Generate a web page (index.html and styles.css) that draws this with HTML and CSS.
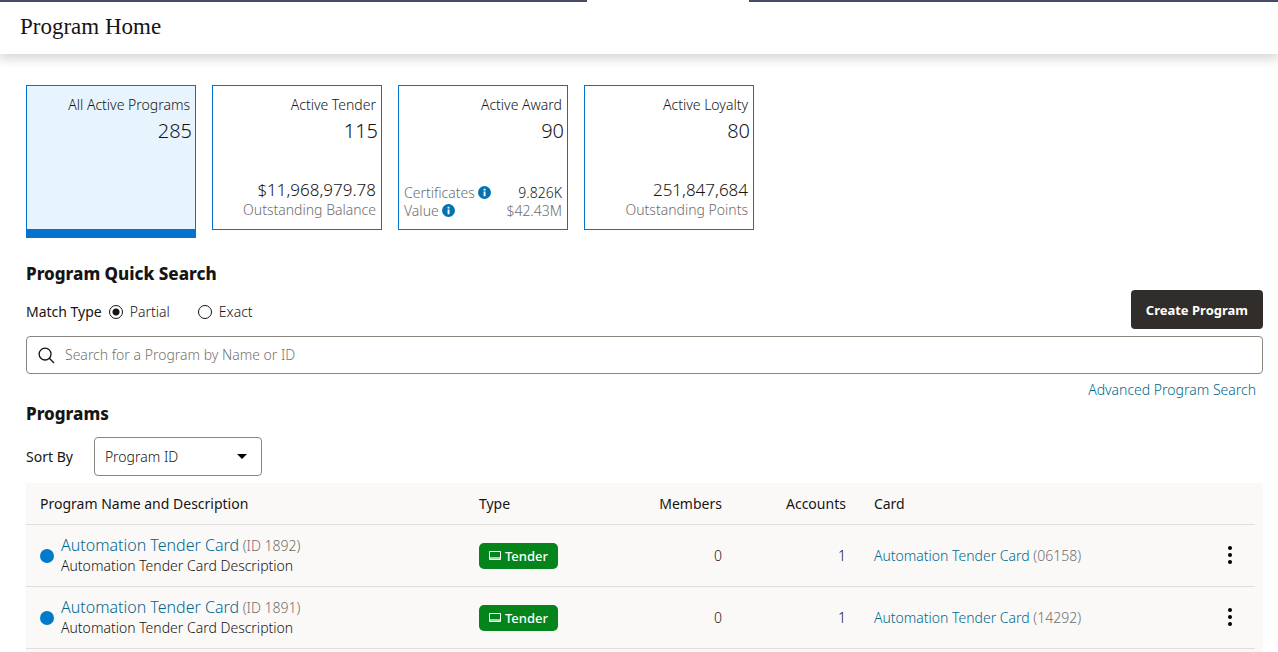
FILE: index.html
```html
<!DOCTYPE html>
<html lang="en">
<head>
	<meta charset="UTF-8">
	<meta name="viewport" content="width=device-width, initial-scale=1.0">
	<title>Program Home</title>
	<link rel="stylesheet" href="styles.css">
</head>
<body>
	<div class="tab-strip">
		<span class="strip-left"></span>
		<span class="strip-tab"></span>
		<span class="strip-right"></span>
	</div>
	<header class="page-header">
		<h1>Program Home</h1>
	</header>
	<main class="content">
		<section class="tiles">
			<div class="tile selected">
				<div class="tile-title">All Active Programs</div>
				<div class="tile-count">285</div>
			</div>
			<div class="tile">
				<div class="tile-title">Active Tender</div>
				<div class="tile-count">115</div>
				<div class="tile-footer">
					<div class="tile-total">$11,968,979.78</div>
					<div class="tile-caption">Outstanding Balance</div>
				</div>
			</div>
			<div class="tile">
				<div class="tile-title">Active Award</div>
				<div class="tile-count">90</div>
				<div class="tile-footer">
					<div class="tile-line">
						<span class="tile-caption">Certificates
							<svg class="info-icon" viewBox="0 0 13 13"><circle cx="6.5" cy="6.5" r="6.5"/><path d="M5.6 2.8h1.9v1.7H5.6zM5.6 5.5h1.9v4.7H5.6z"/></svg>
						</span>
						<span>9.826K</span>
					</div>
					<div class="tile-line">
						<span class="tile-caption">Value
							<svg class="info-icon" viewBox="0 0 13 13"><circle cx="6.5" cy="6.5" r="6.5"/><path d="M5.6 2.8h1.9v1.7H5.6zM5.6 5.5h1.9v4.7H5.6z"/></svg>
						</span>
						<span class="tile-caption">$42.43M</span>
					</div>
				</div>
			</div>
			<div class="tile">
				<div class="tile-title">Active Loyalty</div>
				<div class="tile-count">80</div>
				<div class="tile-footer">
					<div class="tile-total">251,847,684</div>
					<div class="tile-caption">Outstanding Points</div>
				</div>
			</div>
		</section>

		<section class="search-bar">
			<div class="search-options">
				<h2>Program Quick Search</h2>
				<div class="match-type" role="radiogroup" aria-labelledby="matchLabel">
					<span class="field-label" id="matchLabel">Match Type</span>
					<label class="radio"><input type="radio" name="match" checked>Partial</label>
					<label class="radio"><input type="radio" name="match">Exact</label>
				</div>
			</div>
			<button type="button" class="btn">Create Program</button>
		</section>
		<div class="search-box">
			<svg class="search-icon" viewBox="0 0 18 18"><circle cx="7.5" cy="7.5" r="6.3"/><path d="M12 12l5 5"/></svg>
			<input type="text" aria-label="Search programs" placeholder="Search for a Program by Name or ID">
		</div>
		<a class="advanced-link" href="#">Advanced Program Search</a>

		<h2 class="programs-title">Programs</h2>
		<div class="sort-row">
			<label class="field-label" for="sortBy">Sort By</label>
			<div class="select-wrap">
				<select id="sortBy">
					<option>Program ID</option>
					<option>Program Name</option>
				</select>
				<svg class="caret" viewBox="0 0 10 5"><path d="M0 0h10L5 5z"/></svg>
			</div>
		</div>

		<section class="panel">
			<table class="programs">
				<colgroup>
					<col>
					<col class="col-type">
					<col class="col-members">
					<col class="col-accounts">
					<col class="col-card">
					<col class="col-menu">
				</colgroup>
				<thead>
					<tr>
						<th>Program Name and Description</th>
						<th>Type</th>
						<th class="num">Members</th>
						<th class="num">Accounts</th>
						<th>Card</th>
						<th></th>
					</tr>
				</thead>
				<tbody>
					<tr>
						<td>
							<div class="program">
								<span class="dot"></span>
								<div>
									<div class="program-name"><a href="#">Automation Tender Card</a> <span class="muted">(ID 1892)</span></div>
									<div class="program-desc">Automation Tender Card Description</div>
								</div>
							</div>
						</td>
						<td>
							<span class="badge"><svg class="card-icon" viewBox="0 0 12 9"><path d="M.5.5h11v8H.5z" fill="none" stroke="#fff"/><path d="M1 6h10v2H1z" fill="#fff" opacity=".65"/></svg>Tender</span>
						</td>
						<td class="num">0</td>
						<td class="num">1</td>
						<td><a href="#">Automation Tender Card</a> <span class="muted">(06158)</span></td>
						<td class="menu-cell">
							<button type="button" class="menu-btn" aria-label="Actions"><svg viewBox="0 0 4 18"><circle cx="2" cy="2" r="2"/><circle cx="2" cy="9" r="2"/><circle cx="2" cy="16" r="2"/></svg></button>
						</td>
					</tr>
					<tr>
						<td>
							<div class="program">
								<span class="dot"></span>
								<div>
									<div class="program-name"><a href="#">Automation Tender Card</a> <span class="muted">(ID 1891)</span></div>
									<div class="program-desc">Automation Tender Card Description</div>
								</div>
							</div>
						</td>
						<td>
							<span class="badge"><svg class="card-icon" viewBox="0 0 12 9"><path d="M.5.5h11v8H.5z" fill="none" stroke="#fff"/><path d="M1 6h10v2H1z" fill="#fff" opacity=".65"/></svg>Tender</span>
						</td>
						<td class="num">0</td>
						<td class="num">1</td>
						<td><a href="#">Automation Tender Card</a> <span class="muted">(14292)</span></td>
						<td class="menu-cell">
							<button type="button" class="menu-btn" aria-label="Actions"><svg viewBox="0 0 4 18"><circle cx="2" cy="2" r="2"/><circle cx="2" cy="9" r="2"/><circle cx="2" cy="16" r="2"/></svg></button>
						</td>
					</tr>
				</tbody>
			</table>
		</section>
	</main>
</body>
</html>
```

FILE: styles.css
```css
* { box-sizing: border-box; }
body {
	margin: 0;
	min-height: 100vh;
	display: flex;
	flex-direction: column;
	background: #fff;
	color: #161513;
	font-family: "Noto Sans", "Open Sans", sans-serif;
	font-size: 14px;
	font-weight: 350;
	line-height: 20px;
}
a {
	color: #00688c;
	text-decoration: none;
}
a:hover { text-decoration: underline; }
h1, h2 { margin: 0; }
h2 {
	font-size: 17px;
	font-weight: 800;
	line-height: 24px;
}
.tab-strip {
	position: relative;
	z-index: 1;
	display: flex;
	height: 2px;
	background: #fff;
}
.strip-left, .strip-right { background: #464c68; }
.strip-left { flex: 587; }
.strip-tab { width: 162px; }
.strip-right { flex: 529; }
.page-header {
	padding: 11px 20px 13px;
	box-shadow: 0 4px 10px 1px rgba(0, 0, 0, 0.16);
}
.page-header h1 {
	font-family: "Liberation Serif", serif;
	font-size: 23px;
	font-weight: 400;
	line-height: 28px;
}
.content {
	flex: 1;
	display: flex;
	flex-direction: column;
	padding: 31px 15px 0 26px;
}

/* summary tiles */
.tiles {
	display: flex;
	align-items: flex-start;
	gap: 16px;
	margin-bottom: 24px;
}
.tile {
	width: 170px;
	height: 145px;
	padding: 9px 5px;
	border: 1px solid #0572ce;
	display: flex;
	flex-direction: column;
	text-align: right;
}
.tile.selected {
	height: 153px;
	background: #e8f4fd;
	border-bottom-width: 9px;
}
.tile-count {
	margin-right: -2px;
	margin-top: 4px;
	font-size: 20px;
	line-height: 24px;
}
.tile-footer { margin-top: auto; }
.tile-total {
	font-size: 17px;
	line-height: 20px;
}
.tile-caption { color: #6f6d6b; }
.tile-line {
	display: flex;
	justify-content: space-between;
	line-height: 18px;
}
.info-icon {
	width: 13px;
	height: 13px;
	vertical-align: -1px;
}
.info-icon circle { fill: #0572ae; }
.info-icon path { fill: #fff; }

/* quick search */
.search-bar {
	display: flex;
	justify-content: space-between;
	align-items: flex-end;
	margin-bottom: 7px;
}
.search-options { padding-bottom: 7px; }
.match-type {
	display: flex;
	align-items: center;
	margin-top: 16px;
}
.field-label { font-weight: 450; }
.radio {
	display: flex;
	align-items: center;
	gap: 7px;
	margin-left: 7px;
	margin-right: 21px;
}
.radio input {
	appearance: none;
	width: 14px;
	height: 14px;
	margin: 0;
	border: 1px solid #161513;
	border-radius: 50%;
}
.radio input:checked {
	background: radial-gradient(circle, #161513 3px, transparent 4px);
}
.btn {
	height: 39px;
	padding: 0 15px;
	border: none;
	border-radius: 4px;
	background: #312d2a;
	color: #fff;
	font: inherit;
	font-size: 13px;
	font-weight: 700;
	cursor: pointer;
}
.search-box {
	display: flex;
	align-items: center;
	gap: 10px;
	height: 38px;
	padding: 0 11px;
	border: 1px solid #8b8580;
	border-radius: 4px;
}
.search-box input {
	flex: 1;
	padding: 0;
	border: none;
	outline: none;
	font: inherit;
	background: transparent;
}
.search-box input::placeholder { color: #757371; }
.search-icon {
	width: 17px;
	height: 17px;
	fill: none;
	stroke: #161513;
	stroke-width: 1.4;
}
.advanced-link {
	align-self: flex-end;
	margin-top: 6px;
	margin-right: 7px;
}

/* program list */
.programs-title { margin-top: 2px; }
.sort-row {
	display: flex;
	align-items: center;
	gap: 21px;
	margin: 11px 0 7px;
}
.select-wrap {
	position: relative;
	width: 168px;
}
.select-wrap select {
	appearance: none;
	display: block;
	width: 100%;
	height: 39px;
	padding: 0 32px 0 10px;
	border: 1px solid #8b8580;
	border-radius: 4px;
	background: #fff;
	color: inherit;
	font: inherit;
}
.caret {
	position: absolute;
	right: 15px;
	top: 17px;
	width: 10px;
	height: 5px;
	pointer-events: none;
}
.panel {
	flex: 1;
	padding-right: 8px;
	background: #fbf9f8;
}
.programs {
	width: 100%;
	table-layout: fixed;
	border-collapse: separate;
	border-spacing: 0;
}
.col-type { width: 146px; }
.col-members { width: 125px; }
.col-accounts { width: 124px; }
.col-card { width: 28%; }
.col-menu { width: 51px; }
.programs th, .programs td {
	padding: 0 14px;
	border-bottom: 1px solid #e0dedc;
	text-align: left;
	white-space: nowrap;
}
.programs th {
	height: 42px;
	font-weight: 450;
}
.programs td { height: 62px; }
.programs .num { text-align: right; }
.program {
	display: flex;
	align-items: center;
	gap: 7px;
}
.dot {
	width: 14px;
	height: 14px;
	border-radius: 50%;
	background: #007ac9;
}
.program-name a { font-size: 16px; }
.muted { color: #6f6d6b; }
.badge {
	display: inline-flex;
	align-items: center;
	gap: 4px;
	height: 26px;
	padding: 0 10px;
	border-radius: 5px;
	background: #04841a;
	color: #fff;
	font-size: 13px;
	font-weight: 500;
}
.card-icon {
	width: 12px;
	height: 9px;
}
.programs .menu-cell {
	padding: 0;
	text-align: center;
}
.menu-btn {
	padding: 4px 8px;
	border: none;
	background: none;
	cursor: pointer;
}
.menu-btn svg {
	display: block;
	width: 4px;
	height: 18px;
}
```
